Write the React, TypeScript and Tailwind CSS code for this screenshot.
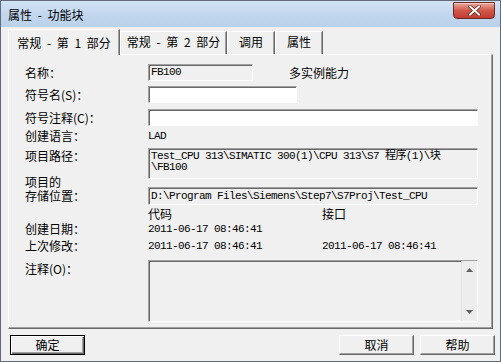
import React from "react";

const cjk = "font-['Noto_Sans_CJK_SC','Noto_Sans',sans-serif]";
const mono = "font-['Liberation_Mono','Noto_Sans_CJK_SC',monospace] text-[11px] tracking-[-0.6px]";

const sunken =
  "border border-t-[#a0a0a0] border-l-[#a0a0a0] border-b-white border-r-white shadow-[inset_1px_1px_0_#696969]";

function Row({ label, className = "", children }: { label: React.ReactNode; className?: string; children?: React.ReactNode }) {
  return (
    <div className={`flex ${className}`}>
      <div className="w-[123px] shrink-0 leading-[14px]">{label}</div>
      {children}
    </div>
  );
}

function Tab({ label, active, w }: { label: string; active?: boolean; w: string }) {
  return (
    <div
      className={`${w} flex items-center justify-center border-t border-l border-white shadow-[inset_-1px_0_0_#a0a0a0] border-r border-r-[#696969] ${
        active ? "h-[26px] -mb-px bg-[#f0f0f0] relative z-10 pt-[1px]" : "h-[23px] pb-[2px]"
      }`}
    >
      <span className="text-[12px] leading-[14px] whitespace-pre [word-spacing:3px]">{label}</span>
    </div>
  );
}

function Button({ label, isDefault }: { label: string; isDefault?: boolean }) {
  return (
    <div
      className={`w-[75px] h-[20px] flex items-center justify-center bg-[#f0f0f0] border ${
        isDefault
          ? "border-black shadow-[inset_1px_1px_0_#fff,inset_-1px_-1px_0_#696969,inset_-2px_-2px_0_#a0a0a0]"
          : "border-t-white border-l-white border-r-[#696969] border-b-[#696969] shadow-[inset_-1px_-1px_0_#a0a0a0]"
      }`}
    >
      <span className="text-[12px] leading-[14px]">{label}</span>
    </div>
  );
}

export default function App() {
  return (
    <div className={`w-[501px] h-[362px] flex flex-col bg-[#f0f0f0] border border-[#5f6b7b] overflow-hidden text-black ${cjk}`}>
      {/* title bar */}
      <div className="h-[26px] shrink-0 flex items-start justify-between pl-[7px] pr-[5px] bg-gradient-to-b from-[#d3e2f4] via-[#c2d7ef] to-[#b9d1ea]">
        <span className="mt-[7px] text-[12px] leading-[14px] whitespace-pre [word-spacing:3px]">属性 - 功能块</span>
        <div className="mt-[1px] w-[42px] h-[17px] rounded-b-[4px] border border-[#6b2a24] bg-gradient-to-b from-[#e9a99f] via-[#d0574b] to-[#c23c30] flex items-center justify-center shadow-[inset_0_1px_0_#f4c8c0]">
          <svg width="13" height="11" viewBox="0 0 13 11">
            <path d="M2 1.5 L11 9.5 M11 1.5 L2 9.5" stroke="#5a1c17" strokeWidth="3.4" strokeLinecap="square" />
            <path d="M2 1.5 L11 9.5 M11 1.5 L2 9.5" stroke="#fff" strokeWidth="2" strokeLinecap="square" />
          </svg>
        </div>
      </div>

      {/* tabs */}
      <div className="px-[7px] pt-[1px]">
        <div className="flex items-end h-[26px]">
          <Tab label="常规 - 第 1 部分" active w="w-[112px]" />
          <Tab label="常规 - 第 2 部分" w="w-[107px]" />
          <Tab label="调用" w="w-[48px]" />
          <Tab label="属性" w="w-[48px]" />
        </div>

        {/* panel */}
        <div className="h-[275px] border border-t-white border-l-white border-r-[#696969] border-b-[#696969] shadow-[inset_-1px_-1px_0_#a0a0a0] pl-[16px] pr-[14px] text-[12px]">
          <Row label="名称：" className="mt-[9px] h-[17px] items-center">
            <div className={`w-[105px] h-[17px] ${sunken} bg-[#f0f0f0] flex items-center pl-[2px] ${mono}`}>FB100</div>
            <span className="ml-[36px] leading-[14px]">多实例能力</span>
          </Row>
          <Row label="符号名(S)：" className="mt-[5px] h-[17px] items-center">
            <div className={`w-[149px] h-[17px] ${sunken} bg-white`} />
          </Row>
          <Row label="符号注释(C)：" className="mt-[6px] h-[17px] items-center">
            <div className={`w-[330px] h-[17px] ${sunken} bg-white`} />
          </Row>
          <Row label="创建语言：" className="mt-[3px] h-[14px] items-center">
            <span className={mono}>LAD</span>
          </Row>
          <Row label={<div className="pt-[1px]">项目路径：</div>} className="mt-[5px] h-[31px] items-start">
            <div className={`w-[330px] h-[31px] ${sunken} bg-[#f0f0f0] pl-[2px] pt-[2px] ${mono} leading-[11px]`}>
              <div>Test_CPU 313\SIMATIC 300(1)\CPU 313\S7 程序(1)\块</div>
              <div>\FB100</div>
            </div>
          </Row>
          <Row
            label={
              <div className="mb-[2px] leading-[14px]">
                <div>项目的</div>
                <div>存储位置：</div>
              </div>
            }
            className="mt-[1px] h-[25px] items-end"
          >
            <div className={`w-[330px] h-[18px] ${sunken} bg-[#f0f0f0] flex items-center pl-[2px] ${mono}`}>
              D:\Program Files\Siemens\Step7\S7Proj\Test_CPU
            </div>
          </Row>
          <Row label="" className="mt-[2px] h-[14px] items-center">
            <span className="w-[174px] leading-[14px]">代码</span>
            <span className="leading-[14px]">接口</span>
          </Row>
          <Row label="创建日期：" className="mt-[1px] h-[14px] items-center">
            <span className={`w-[174px] ${mono}`}>2011-06-17 08:46:41</span>
          </Row>
          <Row label="上次修改：" className="mt-[3px] h-[14px] items-center">
            <span className={`w-[174px] ${mono}`}>2011-06-17 08:46:41</span>
            <span className={mono}>2011-06-17 08:46:41</span>
          </Row>
          <Row label={<div className="pt-[2px]">注释(O)：</div>} className="mt-[7px] h-[62px] items-start">
            <div className={`w-[330px] h-[62px] ${sunken} bg-[#f0f0f0] flex justify-end`}>
              <div className="w-[16px] h-full bg-[#ededed] border-l border-[#e0e0e0] flex flex-col items-center justify-between py-[7px]">
                <svg width="7" height="4" viewBox="0 0 7 4">
                  <path d="M0 4 L3.5 0 L7 4 Z" fill="#606060" />
                </svg>
                <svg width="7" height="4" viewBox="0 0 7 4">
                  <path d="M0 0 L7 0 L3.5 4 Z" fill="#606060" />
                </svg>
              </div>
            </div>
          </Row>
        </div>
      </div>

      {/* buttons */}
      <div className="mt-[6px] flex justify-between pl-[9px] pr-[5px]">
        <Button label="确定" isDefault />
        <div className="flex gap-[6px]">
          <Button label="取消" />
          <Button label="帮助" />
        </div>
      </div>
    </div>
  );
}
